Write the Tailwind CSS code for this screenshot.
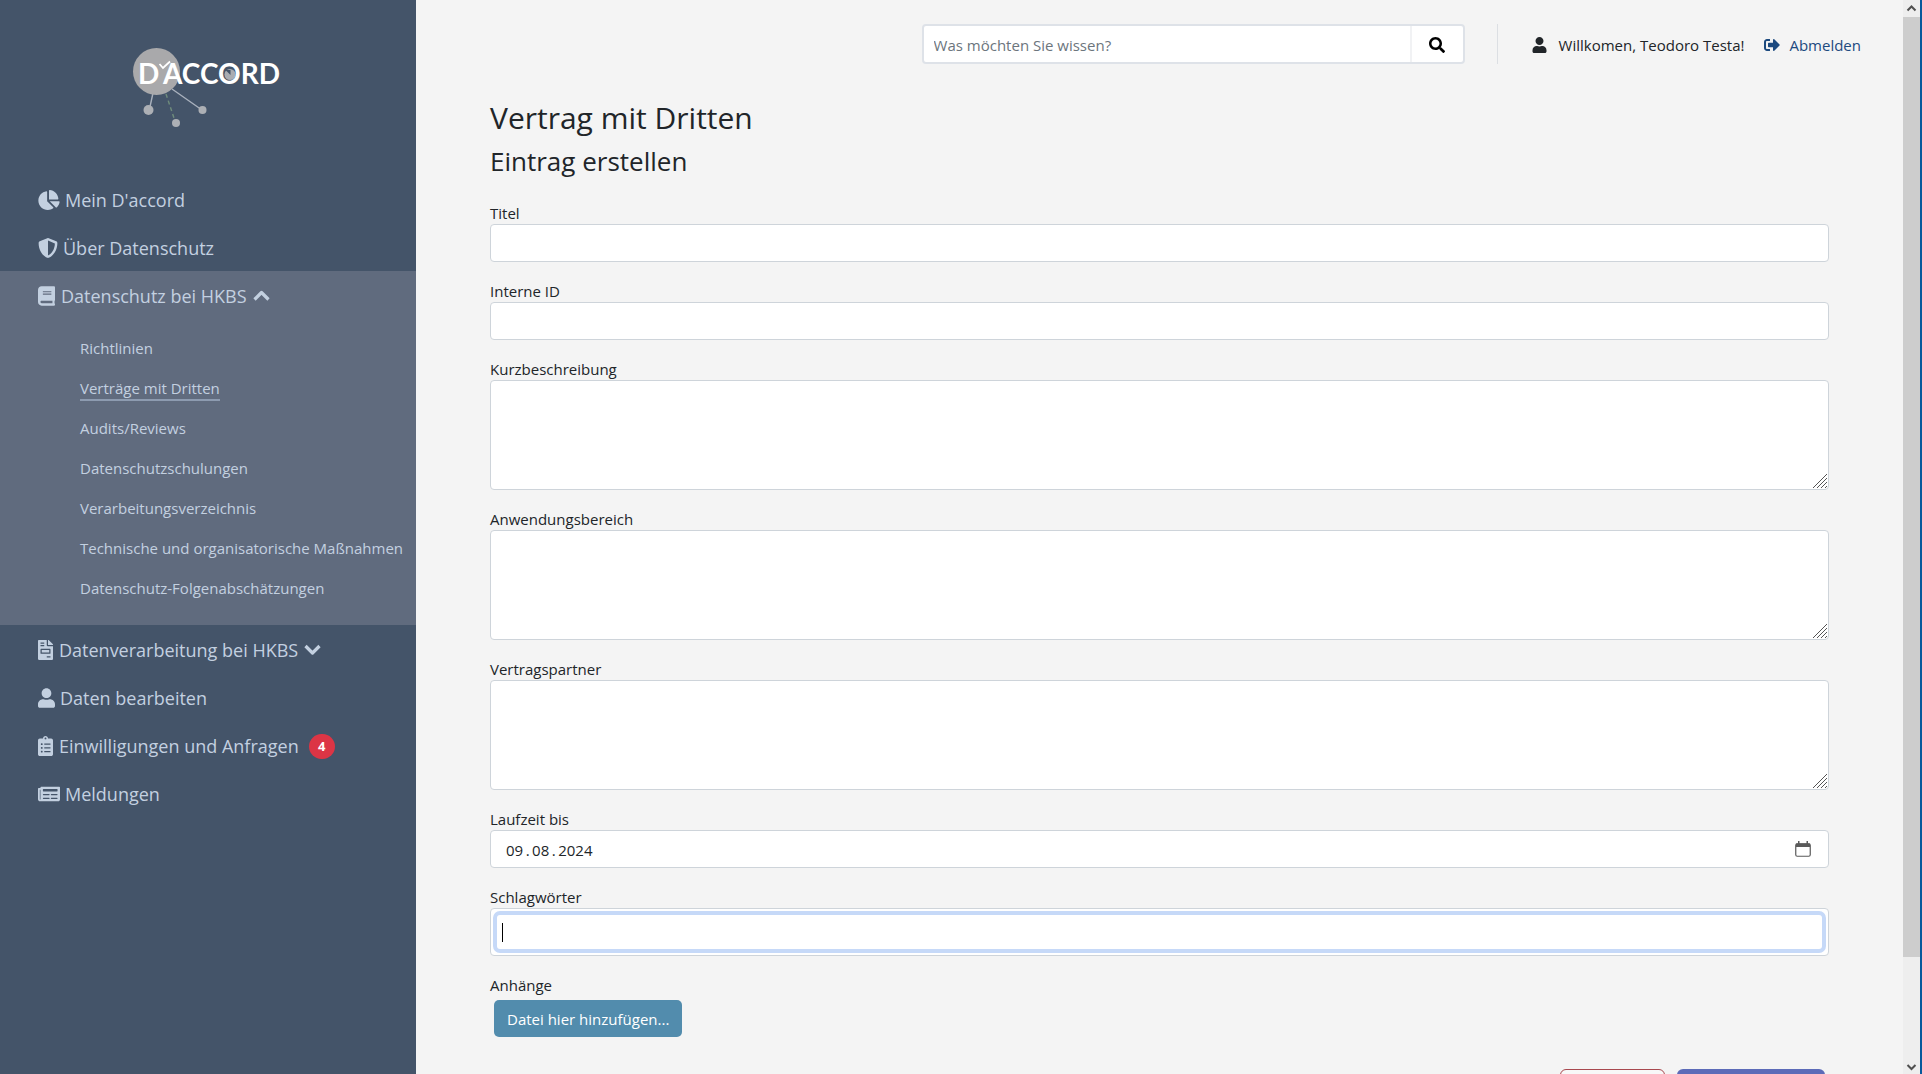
<!DOCTYPE html>
<html lang="de">
<head>
<meta charset="utf-8">
<meta name="viewport" content="width=device-width, initial-scale=1">
<title>D'accord – Vertrag mit Dritten</title>
<script src="https://cdn.jsdelivr.net/npm/@tailwindcss/browser@4"></script>
</head>
<body class="flex h-screen overflow-hidden bg-[#f4f4f4] font-['Open_Sans','Noto_Sans',sans-serif] text-[15px] leading-6 text-[#212529]">

<aside class="w-[416px] shrink-0 overflow-hidden bg-[#445469] text-[#c3d0e0]">
  <a href="#" aria-label="D'accord Startseite" class="flex h-[175px] justify-center pt-[40px]">
    <svg class="h-[96px] w-[160px]" viewBox="128 40 160 96" font-family="Lato, sans-serif" font-weight="700" font-size="28" fill="#fff">
      <g stroke="#a9b1bd" stroke-width="1.4">
        <path d="M153 93l-3.500 16M172 89l30 21"/>
        <path d="M166 94l9 27" stroke="#6f8c7c" stroke-dasharray="4 3"/>
      </g>
      <circle cx="156.500" cy="71.500" r="23.500" fill="#a9a9ab"/>
      <g fill="#adb0b5"><circle cx="148.500" cy="110" r="5"/><circle cx="176" cy="123" r="4"/><circle cx="202.500" cy="110" r="4"/></g>
      <circle cx="230" cy="74.500" r="5.500" fill="#a9acb2"/>
      <path d="M225.500 70h5v5z" fill="#445469"/>
      <text x="138" y="84">D</text>
      <text x="163" y="84">ACCORD</text>
      <path d="M159.500 64l3.500 4 7-6.500" fill="none" stroke="#fff" stroke-width="1.8"/>
    </svg>
  </a>
  <nav aria-label="Hauptnavigation" class="text-lg">
    <a href="#" class="flex h-12 items-center gap-[5px] pt-[2px] pl-[38px]">
      <svg class="h-5 w-[22px] fill-current" viewBox="0 0 544 512"><path d="M527.790 288H290.500l158.030 158.030c6.040 6.040 15.980 6.530 22.190.68 38.700-36.460 65.320-85.610 73.130-140.860 1.340-9.460-6.510-17.850-16.060-17.850zm-15.830-64.800C503.720 103.740 408.260 8.280 288.800.04 279.680-.59 272 7.100 272 16.240V240h223.770c9.140 0 16.820-7.680 16.190-16.800zM224 288V50.710c0-9.550-8.390-17.400-17.840-16.060C86.990 51.490-4.100 155.600.14 280.370 4.500 408.510 114.830 513.590 243.030 511.980c50.400-.63 96.970-16.870 135.260-44.030 7.900-5.600 8.420-17.230 1.570-24.080L224 288z"/></svg>
      Mein D'accord</a>
    <a href="#" class="flex h-12 items-center gap-[5px] pt-[2px] pl-[38px]">
      <svg class="size-5 fill-current" viewBox="0 0 512 512"><path d="M466.500 83.700l-192-80a48.150 48.150 0 0 0-36.900 0l-192 80C27.700 91.100 16 108.600 16 128c0 198.500 114.500 335.700 221.500 380.300 11.800 4.900 25.100 4.900 36.900 0C360.100 472.600 496 349.300 496 128c0-19.400-11.700-36.900-29.500-44.300zM256.100 446.300l-.1-381 175.900 73.300c-3.300 151.400-82.100 261.100-175.800 307.700z"/></svg>
      Über Datenschutz</a>
    <div class="bg-[#606b7e] pb-4">
      <a href="#" class="flex h-12 items-center gap-[6px] pt-[2px] pl-[38px]">
        <svg class="h-5 w-[17px] fill-current" viewBox="0 0 448 512"><path d="M448 360V24c0-13.300-10.700-24-24-24H96C43 0 0 43 0 96v320c0 53 43 96 96 96h328c13.300 0 24-10.700 24-24v-16c0-7.500-3.500-14.300-8.900-18.700-4.200-15.400-4.200-59.300 0-74.700 5.400-4.300 8.900-11.100 8.900-18.600zM128 134c0-3.300 2.700-6 6-6h212c3.300 0 6 2.700 6 6v20c0 3.300-2.700 6-6 6H134c-3.300 0-6-2.700-6-6v-20zm0 64c0-3.300 2.700-6 6-6h212c3.300 0 6 2.700 6 6v20c0 3.300-2.700 6-6 6H134c-3.300 0-6-2.700-6-6v-20zm253.400 250H96c-17.700 0-32-14.300-32-32 0-17.600 14.400-32 32-32h285.400c-1.900 17.100-1.900 46.900 0 64z"/></svg>
        Datenschutz bei HKBS
        <svg class="h-5 w-[17px] fill-none stroke-current" viewBox="0 0 17 20" stroke-width="3.200" stroke-linejoin="round"><path d="M1.500 13.500l7-7 7 7"/></svg></a>
      <ul class="pt-[10px] text-[15px]">
        <li class="flex h-10 items-center pl-[80px]"><a href="#">Richtlinien</a></li>
        <li class="flex h-10 items-center pl-[80px]"><a href="#" class="border-b-2 border-[#8d9bb0] leading-[21px]" aria-current="page">Verträge mit Dritten</a></li>
        <li class="flex h-10 items-center pl-[80px]"><a href="#">Audits/Reviews</a></li>
        <li class="flex h-10 items-center pl-[80px]"><a href="#">Datenschutzschulungen</a></li>
        <li class="flex h-10 items-center pl-[80px]"><a href="#">Verarbeitungsverzeichnis</a></li>
        <li class="flex h-10 items-center pl-[80px]"><a href="#" class="whitespace-nowrap">Technische und organisatorische Maßnahmen</a></li>
        <li class="flex h-10 items-center pl-[80px]"><a href="#">Datenschutz-Folgenabschätzungen</a></li>
      </ul>
    </div>
    <a href="#" class="flex h-12 items-center gap-[6px] pt-[2px] pl-[38px]">
      <svg class="h-5 w-[15px] fill-current" viewBox="0 0 384 512"><path d="M288 256H96v64h192v-64zm89-151L279.100 7c-4.500-4.500-10.600-7-17-7H256v128h128v-6.100c0-6.300-2.500-12.400-7-16.900zm-153 31V0H24C10.700 0 0 10.700 0 24v464c0 13.300 10.700 24 24 24h336c13.300 0 24-10.700 24-24V160H248c-13.200 0-24-10.800-24-24zM64 72c0-4.420 3.580-8 8-8h80c4.420 0 8 3.580 8 8v16c0 4.420-3.580 8-8 8H72c-4.420 0-8-3.580-8-8V72zm0 64c0-4.420 3.580-8 8-8h80c4.420 0 8 3.580 8 8v16c0 4.420-3.580 8-8 8H72c-4.420 0-8-3.580-8-8v-16zm256 304c0 4.420-3.580 8-8 8h-80c-4.420 0-8-3.580-8-8v-16c0-4.420 3.580-8 8-8h80c4.420 0 8 3.580 8 8v16zm0-200v96c0 8.840-7.160 16-16 16H80c-8.840 0-16-7.160-16-16v-96c0-8.840 7.160-16 16-16h224c8.840 0 16 7.160 16 16z"/></svg>
      Datenverarbeitung bei HKBS
      <svg class="h-5 w-[17px] fill-none stroke-current" viewBox="0 0 17 20" stroke-width="3.200" stroke-linejoin="round"><path d="M1.500 6l7 7 7-7"/></svg></a>
    <a href="#" class="flex h-12 items-center gap-[5px] pt-[2px] pl-[38px]">
      <svg class="h-5 w-[17px] fill-current" viewBox="0 0 448 512"><path d="M224 256c70.700 0 128-57.300 128-128S294.700 0 224 0 96 57.300 96 128s57.300 128 128 128zm89.600 32h-16.700c-22.200 10.200-46.900 16-72.900 16s-50.600-5.800-72.900-16h-16.700C60.200 288 0 348.200 0 422.400V464c0 26.500 21.500 48 48 48h352c26.500 0 48-21.500 48-48v-41.600c0-74.200-60.200-134.400-134.400-134.400z"/></svg>
      Daten bearbeiten</a>
    <a href="#" class="flex h-12 items-center gap-[6px] pt-[2px] pl-[38px]">
      <svg class="h-5 w-[15px] fill-current" viewBox="0 0 384 512"><path d="M336 64h-80c0-35.300-28.700-64-64-64s-64 28.700-64 64H48C21.500 64 0 85.500 0 112v352c0 26.500 21.500 48 48 48h288c26.500 0 48-21.500 48-48V112c0-26.500-21.500-48-48-48zM96 424c-13.300 0-24-10.700-24-24s10.700-24 24-24 24 10.700 24 24-10.700 24-24 24zm0-96c-13.300 0-24-10.700-24-24s10.700-24 24-24 24 10.700 24 24-10.700 24-24 24zm0-96c-13.300 0-24-10.700-24-24s10.700-24 24-24 24 10.700 24 24-10.700 24-24 24zm96-192c13.300 0 24 10.700 24 24s-10.700 24-24 24-24-10.700-24-24 10.700-24 24-24zm128 368c0 4.400-3.600 8-8 8H168c-4.400 0-8-3.600-8-8v-16c0-4.400 3.600-8 8-8h144c4.400 0 8 3.600 8 8v16zm0-96c0 4.400-3.600 8-8 8H168c-4.400 0-8-3.600-8-8v-16c0-4.400 3.600-8 8-8h144c4.400 0 8 3.600 8 8v16zm0-96c0 4.400-3.600 8-8 8H168c-4.400 0-8-3.600-8-8v-16c0-4.400 3.600-8 8-8h144c4.400 0 8 3.600 8 8v16z"/></svg>
      Einwilligungen und Anfragen
      <span class="ml-1 flex h-[25px] w-[26px] items-center justify-center rounded-full bg-[#dc3545] text-[13px] font-bold text-white">4</span></a>
    <a href="#" class="flex h-12 items-center gap-[5px] pt-[2px] pl-[38px]">
      <svg class="h-5 w-[22px] fill-current" viewBox="0 0 576 512"><path d="M552 64H88c-13.255 0-24 10.745-24 24v8H24c-13.255 0-24 10.745-24 24v272c0 30.928 25.072 56 56 56h472c26.510 0 48-21.490 48-48V88c0-13.255-10.745-24-24-24zM56 400a8 8 0 0 1-8-8V144h16v248a8 8 0 0 1-8 8zm236-16H140c-6.627 0-12-5.373-12-12v-8c0-6.627 5.373-12 12-12h152c6.627 0 12 5.373 12 12v8c0 6.627-5.373 12-12 12zm208 0H348c-6.627 0-12-5.373-12-12v-8c0-6.627 5.373-12 12-12h152c6.627 0 12 5.373 12 12v8c0 6.627-5.373 12-12 12zm-208-96H140c-6.627 0-12-5.373-12-12v-8c0-6.627 5.373-12 12-12h152c6.627 0 12 5.373 12 12v8c0 6.627-5.373 12-12 12zm208 0H348c-6.627 0-12-5.373-12-12v-8c0-6.627 5.373-12 12-12h152c6.627 0 12 5.373 12 12v8c0 6.627-5.373 12-12 12zm0-96H140c-6.627 0-12-5.373-12-12v-40c0-6.627 5.373-12 12-12h360c6.627 0 12 5.373 12 12v40c0 6.627-5.373 12-12 12z"/></svg>
      Meldungen</a>
  </nav>
</aside>

<main class="min-w-0 flex-1 overflow-hidden">
  <header class="flex h-[88px] items-center justify-end pt-[24px] pr-[42px] pb-[24px]">
    <form role="search" class="flex h-10 w-[543px] rounded border-2 border-[#dee2e8] bg-white">
      <input type="search" aria-label="Suche" placeholder="Was möchten Sie wissen?" class="min-w-0 flex-1 px-[10px] pt-[2px] outline-none placeholder:text-[#6c757d]">
      <button type="button" aria-label="Suchen" class="flex w-[53px] items-center justify-center border-l-2 border-[#f1f2f4] pt-[2px] text-black">
        <svg class="size-4 fill-current" viewBox="0 0 512 512"><path d="M505 442.700L405.300 343c-4.500-4.500-10.600-7-17-7H372c27.600-35.300 44-79.700 44-128C416 93.100 322.900 0 208 0S0 93.100 0 208s93.100 208 208 208c48.300 0 92.700-16.400 128-44v16.300c0 6.400 2.500 12.500 7 17l99.700 99.700c9.400 9.400 24.600 9.400 33.900 0l28.300-28.300c9.400-9.400 9.400-24.600.1-34zM208 336c-70.700 0-128-57.200-128-128 0-70.700 57.200-128 128-128 70.700 0 128 57.200 128 128 0 70.700-57.200 128-128 128z"/></svg>
      </button>
    </form>
    <div class="ml-8 flex h-10 items-center border-l border-[#dcdfe3] pt-[2px] pl-[34px]">
      <svg class="mr-3 h-4 w-[15px] fill-current" viewBox="0 0 448 512"><path d="M224 256c70.700 0 128-57.300 128-128S294.700 0 224 0 96 57.300 96 128s57.300 128 128 128zm89.600 32h-16.700c-22.200 10.200-46.900 16-72.900 16s-50.600-5.800-72.900-16h-16.700C60.200 288 0 348.200 0 422.400V464c0 26.500 21.500 48 48 48h352c26.500 0 48-21.500 48-48v-41.600c0-74.200-60.200-134.400-134.400-134.400z"/></svg>
      <span>Willkomen, Teodoro Testa!</span>
      <a href="#" class="ml-5 flex items-center gap-[9px] text-[#1d4a7f]">
        <svg class="size-4 fill-current" viewBox="0 0 512 512"><path d="M497 273L329 441c-15 15-41 4.500-41-17v-96H152c-13.300 0-24-10.700-24-24v-96c0-13.300 10.700-24 24-24h136V88c0-21.400 25.900-32 41-17l168 168c9.300 9.400 9.300 24.600 0 34zM192 436v-40c0-6.600-5.400-12-12-12H96c-17.700 0-32-14.300-32-32V160c0-17.700 14.300-32 32-32h84c6.600 0 12-5.400 12-12V76c0-6.600-5.400-12-12-12H96c-53 0-96 43-96 96v192c0 53 43 96 96 96h84c6.600 0 12-5.400 12-12z"/></svg>
        Abmelden</a>
    </div>
  </header>

  <div class="pt-[10px] pr-[74px] pl-[74px]">
    <h1 class="mb-[3px] text-[30px] leading-10">Vertrag mit Dritten</h1>
    <h2 class="mb-[19px] text-[26px] leading-10">Eintrag erstellen</h2>
    <form class="flex flex-col gap-4">
      <div class="flex flex-col">
        <label for="titel" class="pt-[2px] leading-[22px]">Titel</label>
        <input id="titel" type="text" class="h-[38px] rounded border border-[#ced4da] bg-white px-3">
      </div>
      <div class="flex flex-col">
        <label for="id" class="pt-[2px] leading-[22px]">Interne ID</label>
        <input id="id" type="text" class="h-[38px] rounded border border-[#ced4da] bg-white px-3">
      </div>
      <div class="relative flex flex-col">
        <label for="kurz" class="pt-[2px] leading-[22px]">Kurzbeschreibung</label>
        <textarea id="kurz" class="h-[110px] resize-none rounded border border-[#ced4da] bg-white px-3"></textarea>
        <svg class="absolute right-[2px] bottom-[2px] size-[14px] stroke-[#555] stroke-1" viewBox="0 0 14 14"><path d="M0 14L14 0M4 14L14 4M8 14l6-6M12 14l2-2"/></svg>
      </div>
      <div class="relative flex flex-col">
        <label for="bereich" class="pt-[2px] leading-[22px]">Anwendungsbereich</label>
        <textarea id="bereich" class="h-[110px] resize-none rounded border border-[#ced4da] bg-white px-3"></textarea>
        <svg class="absolute right-[2px] bottom-[2px] size-[14px] stroke-[#555] stroke-1" viewBox="0 0 14 14"><path d="M0 14L14 0M4 14L14 4M8 14l6-6M12 14l2-2"/></svg>
      </div>
      <div class="relative flex flex-col">
        <label for="partner" class="pt-[2px] leading-[22px]">Vertragspartner</label>
        <textarea id="partner" class="h-[110px] resize-none rounded border border-[#ced4da] bg-white px-3"></textarea>
        <svg class="absolute right-[2px] bottom-[2px] size-[14px] stroke-[#555] stroke-1" viewBox="0 0 14 14"><path d="M0 14L14 0M4 14L14 4M8 14l6-6M12 14l2-2"/></svg>
      </div>
      <div class="flex flex-col">
        <label for="laufzeit" class="pt-[2px] leading-[22px]">Laufzeit bis</label>
        <div class="flex h-[38px] items-center rounded border border-[#ced4da] bg-white pr-[17px]">
          <input id="laufzeit" type="text" value="09&#8201;.&#8201;08&#8201;.&#8201;2024" class="h-full min-w-0 flex-1 px-[15px] pt-[2px] outline-none">
          <button type="button" aria-label="Kalender öffnen">
            <svg class="size-4 text-[#5a5a5a]" viewBox="0 0 16 16"><rect x=".75" y="2.750" width="14.500" height="12.500" rx="1.500" fill="none" stroke="currentColor" stroke-width="1.200"/><path d="M1 2.500h14V6H1zM3 0h1.500v3H3zM11.500 0H13v3h-1.500z" fill="currentColor"/></svg>
          </button>
        </div>
      </div>
      <div class="flex flex-col">
        <label for="tags" class="pt-[2px] leading-[22px]">Schlagwörter</label>
        <div class="relative flex h-12 rounded border border-[#ced4da] bg-white p-[6px]">
          <input id="tags" type="text" class="min-w-0 flex-1 rounded-[3px] px-[5px] ring-4 ring-[#c6d9f8] caret-transparent outline-none">
          <span class="absolute top-[14px] left-[11px] h-[19px] w-px bg-black"></span>
        </div>
      </div>
      <div class="flex flex-col items-start">
        <span class="pt-[2px] leading-[22px]">Anhänge</span>
        <button type="button" class="mt-1 ml-1 h-[37px] rounded-[5px] bg-[#528cad] px-[13px] whitespace-nowrap text-white">Datei hier hinzufügen...</button>
      </div>
      <div class="flex justify-end gap-3 pt-4 pr-1">
        <button type="button" aria-label="Abbrechen" class="h-[38px] w-[105px] rounded-md border border-[#a8484f] bg-[#f8f8f8]"></button>
        <button type="submit" aria-label="Speichern" class="h-[38px] w-[148px] rounded-md bg-[#5c6bb8]"></button>
      </div>
    </form>
  </div>
</main>

<!-- scroll track with the window edge beside it -->
<div aria-hidden="true" class="flex w-[19px] shrink-0 flex-col items-center border-r-2 border-[#075a9c] bg-[#eeeeee]">
  <svg class="h-[17px] w-full shrink-0 fill-none stroke-[#505050] stroke-2" viewBox="0 0 17 17"><path d="M4.500 10.500l4-4 4 4"/></svg>
  <div class="w-full flex-[47] bg-[#cdcdcd]"></div>
  <div class="flex-[5]"></div>
  <svg class="h-[17px] w-full shrink-0 fill-none stroke-[#505050] stroke-2" viewBox="0 0 17 17"><path d="M4.500 8l4 4 4-4"/></svg>
</div>
</body>
</html>
